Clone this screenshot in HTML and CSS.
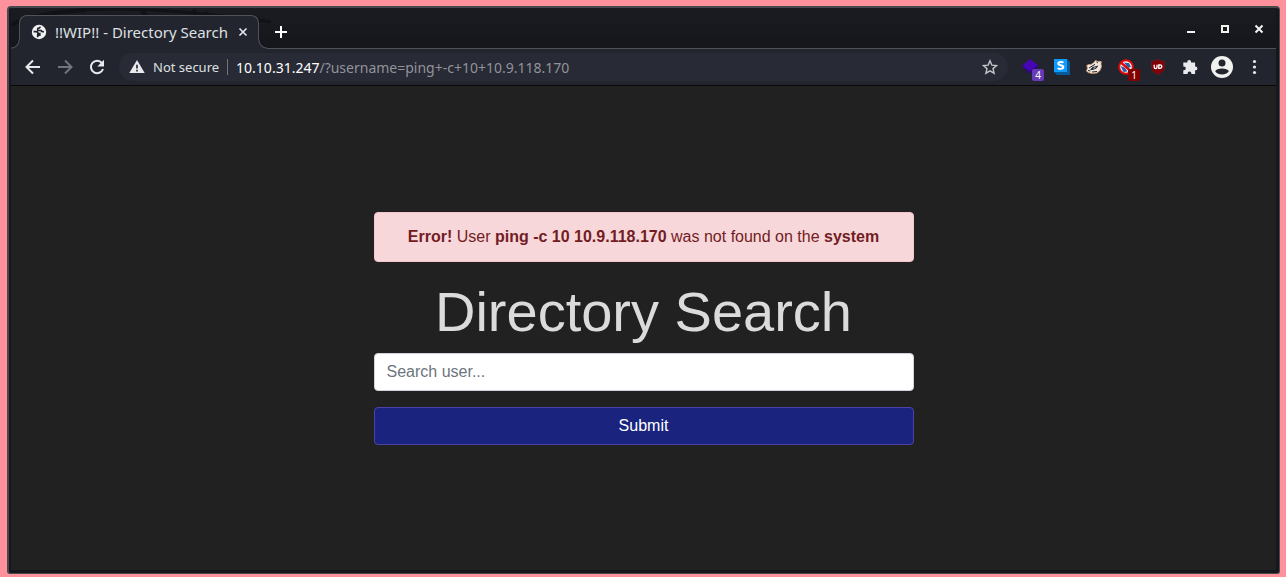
FILE: index.html
```html
<!DOCTYPE html>
<html lang="en">
<head>
<meta charset="utf-8">
<title>!!WIP!! - Directory Search</title>
<link rel="stylesheet" href="styles.css">
</head>
<body>
<div class="window">
  <header class="tab-strip">
    <svg class="strip-art" width="260" height="40" viewBox="0 0 260 40" fill="none" stroke="#111216" aria-hidden="true">
      <path d="M0 17Q28 4 75 2" stroke-width="4"/><path d="M60 3Q130-4 260 14" stroke-width="3"/><path d="M128 0l12 12M182 2l8 8M194 4l6 6" stroke-width="4"/>
    </svg>
    <div class="tab">
      <svg width="16" height="16" viewBox="0 0 16 16" aria-hidden="true"><circle cx="8" cy="8" r="7.200" fill="#f0f1f1"/><path d="M2.600 7.600h2.600q1.700 0 1.700 1.900h1.900v1.700H6.700v2M9.300 2.700q-.3 1.700-2.500 1.900v1.900h3.300q.3 1.500 2.900 1.200" fill="none" stroke="#22242e" stroke-width="1.700"/></svg>
      <span class="tab-title">!!WIP!! - Directory Search</span>
      <button class="icon-btn" aria-label="Close tab"><svg width="10" height="10" viewBox="0 0 10 10"><path d="M1.500 1.500l7 7m0-7l-7 7" stroke="#e8eaed" stroke-width="1.600"/></svg></button>
    </div>
    <button class="icon-btn new-tab" aria-label="New tab"><svg width="12" height="12" viewBox="0 0 12 12"><path d="M6 0v12M0 6h12" stroke="#fff" stroke-width="2"/></svg></button>
    <div class="window-controls">
      <button class="icon-btn" aria-label="Minimize"><svg width="10" height="10" viewBox="0 0 10 10"><path d="M1 8h8" stroke="#f2f2ee" stroke-width="2"/></svg></button>
      <button class="icon-btn" aria-label="Maximize"><svg width="10" height="10" viewBox="0 0 10 10"><path d="M2 2h6v6H2z" fill="none" stroke="#f2f2ee" stroke-width="2"/></svg></button>
      <button class="icon-btn" aria-label="Close window"><svg width="10" height="10" viewBox="0 0 10 10"><path d="M1.500 1.500l7 7m0-7l-7 7" stroke="#f2f2ee" stroke-width="2"/></svg></button>
    </div>
  </header>
  <nav class="toolbar" aria-label="Browser toolbar">
    <div class="nav-buttons">
      <button class="icon-btn" aria-label="Back"><svg width="16" height="16" viewBox="0 0 16 16" fill="none" stroke="#e8eaed" stroke-width="2"><path d="M15 8H2M8 1.500L1.500 8 8 14.500"/></svg></button>
      <button class="icon-btn" aria-label="Forward"><svg width="16" height="16" viewBox="0 0 16 16" fill="none" stroke="#74757b" stroke-width="2"><path d="M1 8h13M8 1.500L14.500 8 8 14.500"/></svg></button>
      <button class="icon-btn" aria-label="Reload"><svg width="16" height="16" viewBox="0 0 16 16"><path d="M13 4.100A6.200 6.200 0 1 0 14 10" fill="none" stroke="#e8eaed" stroke-width="2"/><path d="M15 .8v6.700H8.300z" fill="#e8eaed"/></svg></button>
    </div>
    <div class="omnibox">
      <svg width="16" height="16" viewBox="0 0 16 16" aria-hidden="true"><path d="M8 1l7.700 13H.3z" fill="#e8eaed"/><path d="M8 5.800v3.800M8 10.700v1.700" stroke="#282a35" stroke-width="1.700"/></svg>
      <span class="security">Not secure</span>
      <span class="url"><span class="host">10.10.31.247</span>/?username=ping+-c+10+10.9.118.170</span>
      <button class="icon-btn" aria-label="Bookmark this page"><svg width="16" height="16" viewBox="0 0 16 16"><path d="M8 1.800l1.900 4.300 4.700.4-3.600 3.100 1.100 4.600L8 11.800l-4.100 2.400L5 9.600 1.400 6.500l4.700-.4z" fill="none" stroke="#c4c5c9" stroke-width="1.400"/></svg></button>
    </div>
    <div class="extensions">
      <button class="icon-btn" aria-label="Layer extension, 4"><svg width="16" height="16" viewBox="0 0 16 16"><path d="M0 7l7 8 9-7V5L8 8z" fill="#2f087c"/><path d="M8 0l8 6-8 6-8-5z" fill="#4706b4"/></svg><span class="badge badge-purple">4</span></button>
      <button class="icon-btn" aria-label="S extension"><svg width="16" height="16" viewBox="0 0 16 16"><path d="M13 0l3 3v13H3l-3-3z" fill="#075b98"/><path d="M0 0h13v13H0z" fill="#109bff"/><path d="M9.300 3.700C8.600 2.700 4.300 2.300 4.300 4.500c0 2.400 5 1 5 3.500 0 2.400-4.600 2.200-5.500 1" fill="none" stroke="#fff" stroke-width="2"/></svg></button>
      <button class="icon-btn" aria-label="Badger extension"><svg width="16" height="16" viewBox="0 0 16 16"><path d="M.5 12L1.500 9 .7 6.500 2.500 5.500 5 5.500 8 3.500 9.500 1.500 12 2.500 15.300 2.500 15 5 15.500 7.500 14 11.500 11 14 6 14.500 2 13.500z" fill="#efe8e0" stroke="#d29b70" stroke-width=".8"/><path d="M3 9l6-3.700M10.500 3l1.500 1M2 11.500l2.500.5M6 13l5-.5" fill="none" stroke="#25242a"/><path d="M4 11l2.500-3 6-1.500L10 9.800 6.500 11z" fill="#25242a"/><path d="M7.500 9.300l2-.8" stroke="#efe8e0"/></svg></button>
      <button class="icon-btn" aria-label="Blocker extension, 1"><svg width="16" height="16" viewBox="0 0 16 16"><circle cx="8" cy="8" r="7" fill="#fff"/><path d="M6 3.500l5 .5 2 4-3 1zM2.500 7l4 1.500 3 4-4 .5z" fill="#285da9"/><circle cx="8" cy="8" r="6.800" fill="none" stroke="#e20909" stroke-width="2"/><path d="M3 3.500l10 9" stroke="#e20909" stroke-width="2.400"/></svg><span class="badge badge-red">1</span></button>
      <button class="icon-btn" aria-label="Shield extension"><svg width="16" height="16" viewBox="0 0 16 16"><path d="M8 .3c2 1.500 4 1.700 6.500 1.700v6c0 4-3 6-6.500 7.700C4.500 14 1.500 12 1.500 8V2C4 2 6 1.800 8 .3z" fill="#800006" stroke="#622329" stroke-width=".7"/><path d="M4.200 5.700v2.500q0 1.300 1.400 1.300T7 8.200V5.700M8.800 6v3.300h1q2 0 2-1.700t-2-1.600z" fill="none" stroke="#fff" stroke-width="1.300"/></svg></button>
      <button class="icon-btn" aria-label="Extensions"><svg width="16" height="16" viewBox="0 0 16 16"><path d="M1.300 3.500h4V3a1.900 1.900 0 0 1 3.800 0v.5h4v4h.4a1.900 1.900 0 0 1 0 3.800h-.4V15H9.400v-.6a1.900 1.900 0 0 0-3.800 0v.6H1.300v-3.800h.6a1.900 1.900 0 0 0 0-3.800h-.6z" fill="#e8eaed"/></svg></button>
      <button class="icon-btn" aria-label="Profile"><svg width="22" height="22" viewBox="0 0 22 22"><circle cx="11" cy="11" r="11" fill="#f1f1f0"/><circle cx="11" cy="7" r="3.500" fill="#22242e"/><path d="M4.200 15.200C5.500 11.500 16.500 11.500 17.800 15.200 15 19.600 7 19.600 4.200 15.200z" fill="#22242e"/></svg></button>
      <button class="icon-btn" aria-label="Menu"><svg width="16" height="16" viewBox="0 0 16 16" fill="#e8eaed"><circle cx="8.500" cy="2.500" r="1.600"/><circle cx="8.500" cy="8" r="1.600"/><circle cx="8.500" cy="13.500" r="1.600"/></svg></button>
    </div>
  </nav>
  <main class="page">
    <form class="search">
      <div class="alert" role="alert"><strong>Error!</strong> User <strong>ping -c 10 10.9.118.170</strong> was not found on the <strong>system</strong></div>
      <h1 class="heading">Directory Search</h1>
      <input class="field" type="text" name="username" placeholder="Search user..." aria-label="Search user">
      <button class="submit" type="submit">Submit</button>
    </form>
  </main>
</div>
</body>
</html>
```
FILE: styles.css
```css
* { box-sizing: border-box; }
body {
  margin: 0;
  min-height: 100vh;
  display: flex;
  padding: 6px 6px 3px 7px;
  background: #ff919d;
  font-family: "Noto Sans", sans-serif;
  font-size: 14px;
}
button, input { font: inherit; }
.window {
  flex: 1;
  min-width: 0;
  display: flex;
  flex-direction: column;
  border: solid #48494d;
  border-width: 2px 1px 1px 2px;
  border-radius: 4px 4px 3px 3px;
  background: #16171d;
  padding: 0 3px 3px 2px;
}
.icon-btn {
  position: relative;
  display: flex;
  flex: none;
  align-items: center;
  justify-content: center;
  padding: 0;
  border: 0;
  background: none;
}
.icon-btn svg, .tab svg, .omnibox svg { display: block; flex: none; }
.tab-strip {
  position: relative;
  display: flex;
  align-items: center;
  height: 41px;
  padding-left: 8px;
  border-bottom: 1px solid #505259;
  background: linear-gradient(#1b1c21, #15161b);
}
.strip-art { position: absolute; left: 0; top: 0; }
.tab {
  position: relative;
  display: flex;
  align-items: center;
  align-self: flex-end;
  gap: 8px;
  width: 240px;
  height: 34px;
  margin-bottom: -1px;
  padding: 0 10px 2px 11px;
  border: 1px solid #505259;
  border-bottom: 0;
  border-radius: 8px 8px 0 0;
  background: #22242e;
}
.tab::before, .tab::after {
  content: "";
  position: absolute;
  bottom: 0;
  width: 9px;
  height: 9px;
}
.tab::before { left: -9px; background: radial-gradient(circle at 0 0, transparent 7px, #505259 8px, #22242e 9px); }
.tab::after { right: -9px; background: radial-gradient(circle at 100% 0, transparent 7px, #505259 8px, #22242e 9px); }
.tab-title {
  flex: 1;
  min-width: 0;
  white-space: nowrap;
  font-size: 15px;
  line-height: 20px;
  color: #dfe0e2;
}
.new-tab {
  align-self: flex-end;
  height: 32px;
  margin-left: 16px;
}
.window-controls {
  display: flex;
  gap: 24px;
  margin: 0 12px 0 auto;
  padding-top: 2px;
}
.toolbar {
  display: flex;
  align-items: center;
  gap: 14px;
  height: 37px;
  padding: 0 14px;
  border-bottom: 1px solid #08080a;
  background: #22242e;
}
.nav-buttons { display: flex; gap: 16px; }
.omnibox {
  flex: 1;
  min-width: 0;
  display: flex;
  align-items: center;
  height: 28px;
  padding: 0 10px;
  border-radius: 14px;
  background: #282a35;
}
.security {
  margin: 0 8px;
  padding-right: 8px;
  border-right: 1px solid #74757c;
  font-size: 13px;
  line-height: 16px;
  white-space: nowrap;
  color: #dfe0e2;
}
.url { flex: 1; white-space: nowrap; color: #92939a; }
.host { color: #fff; }
.extensions { display: flex; align-items: center; gap: 16px; }
.extensions .icon-btn { width: 16px; }
.badge {
  position: absolute;
  left: 10px;
  top: 10px;
  width: 12px;
  height: 12px;
  border-radius: 2px;
  font-size: 10px;
  line-height: 12px;
  text-align: center;
  color: #fff;
}
.badge-purple { background: #673ab7; }
.badge-red { background: #830000; }
.page {
  flex: 1;
  display: grid;
  place-items: center;
  background: #212121;
  font-family: "Liberation Sans", Arial, sans-serif;
  font-size: 16px;
  line-height: 24px;
}
.search { width: 100%; max-width: 540px; text-align: center; }
.alert {
  margin-bottom: 16px;
  padding: 12px 20px;
  border: 1px solid #f5c6cb;
  border-radius: 4px;
  background: #f8d7da;
  color: #721c24;
}
.heading {
  margin: 0 0 8px;
  font-size: 56px;
  font-weight: 400;
  line-height: 67px;
  color: #dbdbdb;
}
.field, .submit {
  display: block;
  width: 100%;
  height: 38px;
  padding: 6px 12px;
  border: 1px solid #ced4da;
  border-radius: 4px;
}
.field { margin-bottom: 16px; background: #fff; color: #495057; }
.field::placeholder { color: #6c757d; opacity: 1; }
.submit { border-color: #4c43a8; background: #1a237e; color: #fff; }
```
